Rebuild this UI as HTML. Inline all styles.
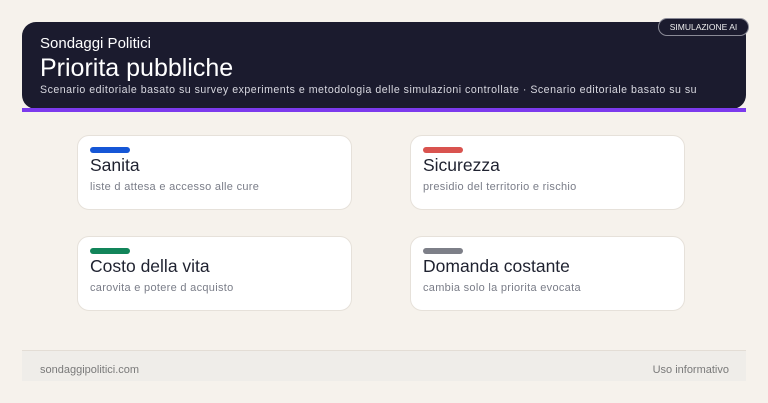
<!DOCTYPE html>
<html><head><meta charset="utf-8"><style>
*{margin:0;padding:0;box-sizing:border-box}
body{width:768px;height:403px;background:#f6f2ec;font-family:"Liberation Sans",sans-serif;position:relative;overflow:hidden}
.hdr{position:absolute;left:22px;top:22px;width:724px;height:87px;background:#1b1b2e;border-radius:14px;color:#fff}
.bar{position:absolute;left:22px;top:108px;width:724px;height:4px;background:#7c3aed}
.badge{position:absolute;left:658px;top:18px;width:91px;height:18px;border:1px solid #8a8a96;border-radius:9px;background:#1b1b2e;color:#eee;font-size:8.5px;line-height:17px;text-align:center}
.h1{position:absolute;left:18px;top:13px;font-size:15px}
.h2{position:absolute;left:18px;top:32px;font-size:25px}
.h3{position:absolute;left:18px;top:62px;font-size:10.6px;color:#d8d8e0;white-space:nowrap;letter-spacing:0.5px}
.card{position:absolute;width:275px;height:75px;background:#fff;border:1px solid #e6e1da;border-radius:12px}
.card i{position:absolute;left:12px;top:11px;width:40px;height:6px;border-radius:3px}
.card b{position:absolute;left:12px;top:19px;font-weight:normal;font-size:17.5px;color:#1f2230}
.card span{position:absolute;left:12px;top:45px;font-size:11px;color:#7a7d88;letter-spacing:0.3px}
.foot{position:absolute;left:22px;top:350px;width:724px;height:31px;background:#efede9;border-top:1px solid #e3ddd5;font-size:11px;color:#7a7a7a}
</style></head><body>
<div class="hdr">
<div class="h1">Sondaggi Politici</div>
<div class="h2">Priorita pubbliche</div>
<div class="h3">Scenario editoriale basato su survey experiments e metodologia delle simulazioni controllate · Scenario editoriale basato su su</div>
</div>
<div class="bar"></div>
<div class="badge">SIMULAZIONE AI</div>
<div class="card" style="left:77px;top:135px"><i style="background:#1556d6"></i><b>Sanita</b><span>liste d attesa e accesso alle cure</span></div>
<div class="card" style="left:410px;top:135px"><i style="background:#d9534f"></i><b>Sicurezza</b><span>presidio del territorio e rischio</span></div>
<div class="card" style="left:77px;top:236px"><i style="background:#12855a"></i><b>Costo della vita</b><span>carovita e potere d acquisto</span></div>
<div class="card" style="left:410px;top:236px"><i style="background:#7d7f88"></i><b>Domanda costante</b><span>cambia solo la priorita evocata</span></div>
<div class="foot"><span style="position:absolute;left:18px;top:13px">sondaggipolitici.com</span><span style="position:absolute;right:17px;top:13px">Uso informativo</span></div>
</body></html>
